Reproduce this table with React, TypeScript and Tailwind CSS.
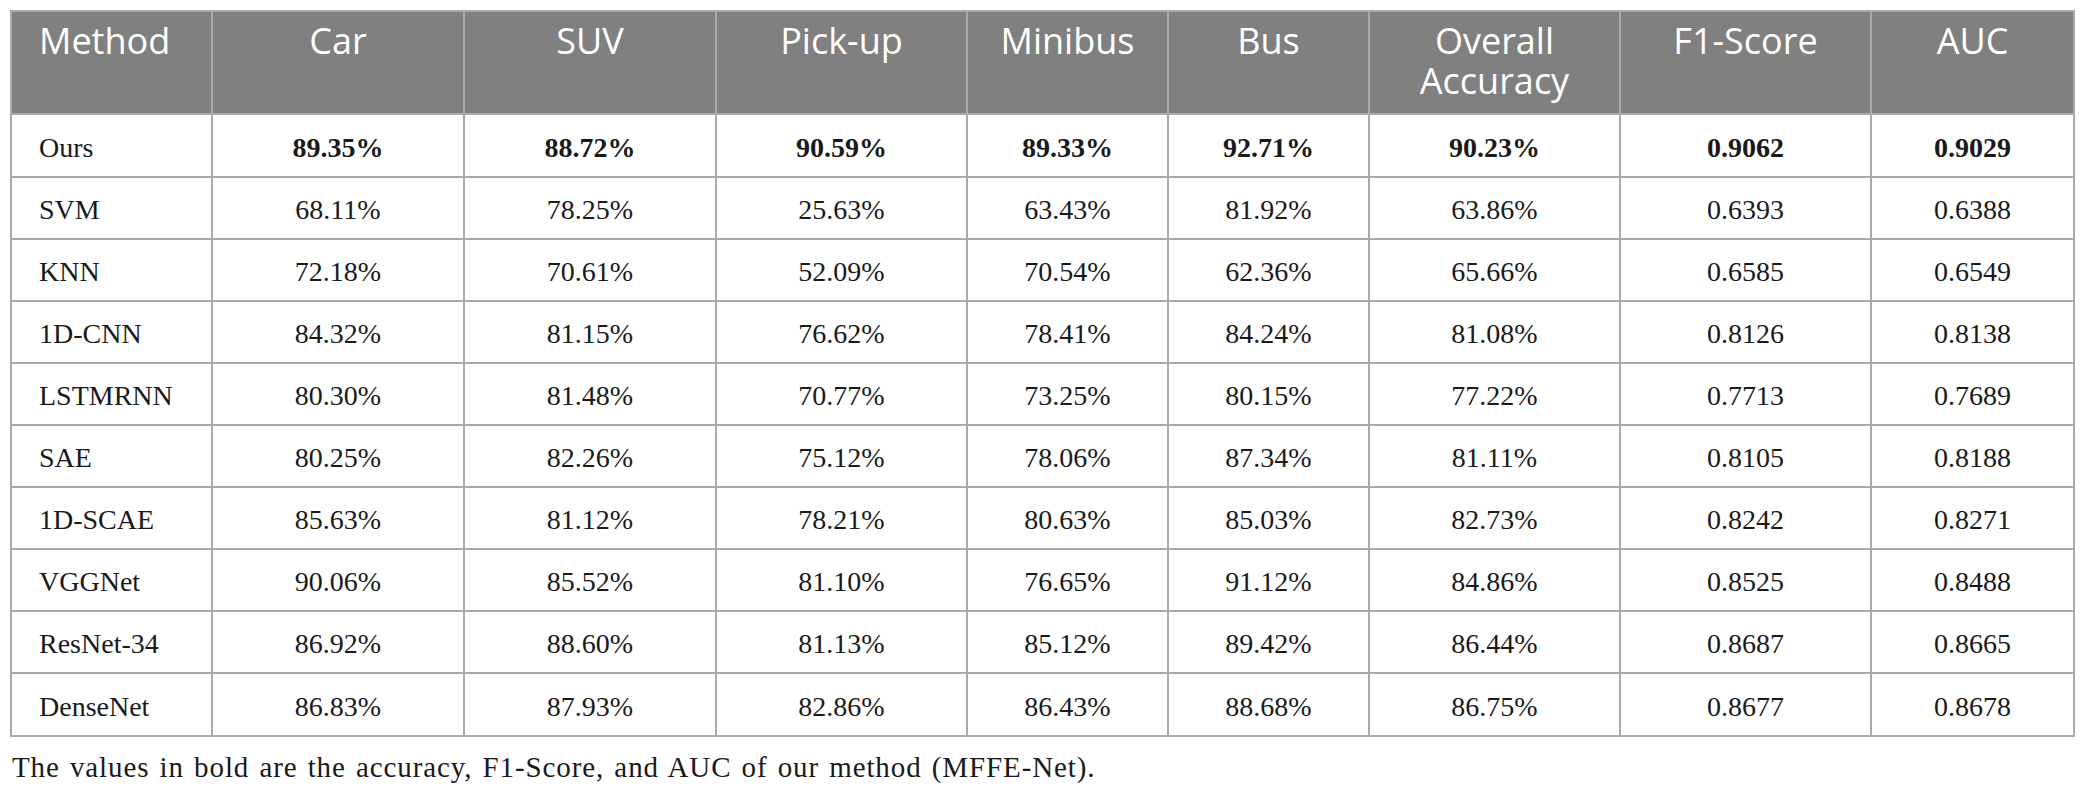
import React from "react";

const rows: { name: string; vals: string[]; bold?: boolean }[] = [
  { name: "Ours", vals: ["89.35%", "88.72%", "90.59%", "89.33%", "92.71%", "90.23%", "0.9062", "0.9029"], bold: true },
  { name: "SVM", vals: ["68.11%", "78.25%", "25.63%", "63.43%", "81.92%", "63.86%", "0.6393", "0.6388"] },
  { name: "KNN", vals: ["72.18%", "70.61%", "52.09%", "70.54%", "62.36%", "65.66%", "0.6585", "0.6549"] },
  { name: "1D-CNN", vals: ["84.32%", "81.15%", "76.62%", "78.41%", "84.24%", "81.08%", "0.8126", "0.8138"] },
  { name: "LSTMRNN", vals: ["80.30%", "81.48%", "70.77%", "73.25%", "80.15%", "77.22%", "0.7713", "0.7689"] },
  { name: "SAE", vals: ["80.25%", "82.26%", "75.12%", "78.06%", "87.34%", "81.11%", "0.8105", "0.8188"] },
  { name: "1D-SCAE", vals: ["85.63%", "81.12%", "78.21%", "80.63%", "85.03%", "82.73%", "0.8242", "0.8271"] },
  { name: "VGGNet", vals: ["90.06%", "85.52%", "81.10%", "76.65%", "91.12%", "84.86%", "0.8525", "0.8488"] },
  { name: "ResNet-34", vals: ["86.92%", "88.60%", "81.13%", "85.12%", "89.42%", "86.44%", "0.8687", "0.8665"] },
  { name: "DenseNet", vals: ["86.83%", "87.93%", "82.86%", "86.43%", "88.68%", "86.75%", "0.8677", "0.8678"] },
];

const widths = [201, 252, 252, 251, 201, 201, 251, 251, 203];
const headers = ["Method", "Car", "SUV", "Pick-up", "Minibus", "Bus", "Overall Accuracy", "F1-Score", "AUC"];

export default function App() {
  return (
    <div className="w-[2087px] h-[797px] bg-white overflow-hidden">
      <div className="pt-[10px] pl-[10px]">
        <table className="table-fixed border-collapse border-2 border-[#aaaaaa] w-[2064px]">
          <colgroup>
            {widths.map((w, i) => (
              <col key={i} style={{ width: w }} />
            ))}
          </colgroup>
          <thead>
            <tr className="h-[103px] bg-[#808080]">
              {headers.map((h, i) => (
                <th
                  key={h}
                  className={`border-2 border-[#aaaaaa] align-top pt-[9px] font-normal text-white text-[36px] leading-[40px] font-['Open_Sans',sans-serif] ${
                    i === 0 ? "text-left pl-[27px]" : "text-center px-[20px]"
                  }`}
                >
                  {h}
                </th>
              ))}
            </tr>
          </thead>
          <tbody>
            {rows.map((r, ri) => (
              <tr key={r.name} className={ri === 0 || ri === 9 ? "h-[63px]" : "h-[62px]"}>
                <td className="border-2 border-[#aaaaaa] pl-[27px] pt-[4px] text-left text-[28px] text-[#1a1a1a] font-['Liberation_Serif',serif] leading-[32px]">
                  {r.name}
                </td>
                {r.vals.map((v, vi) => (
                  <td
                    key={vi}
                    className={`border-2 border-[#aaaaaa] pt-[4px] text-center text-[28px] text-[#1a1a1a] font-['Liberation_Serif',serif] leading-[32px] ${
                      r.bold ? "font-bold" : "font-normal"
                    }`}
                  >
                    {v}
                  </td>
                ))}
              </tr>
            ))}
          </tbody>
        </table>
        <p className="mt-[14px] pl-[2px] text-[29px] leading-[32px] tracking-[0.9px] [word-spacing:2px] text-[#1a1a1a] font-['Liberation_Serif',serif]">
          The values in bold are the accuracy, F1-Score, and AUC of our method (MFFE-Net).
        </p>
      </div>
    </div>
  );
}
